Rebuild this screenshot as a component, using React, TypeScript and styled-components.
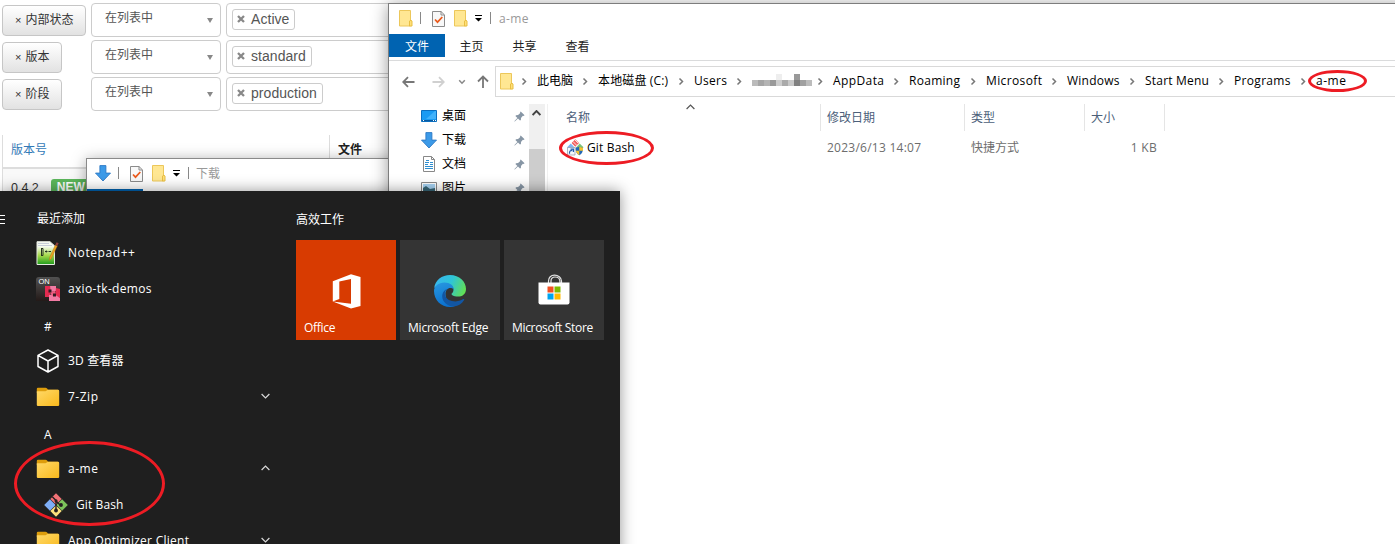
import React from 'react';
import styled, { createGlobalStyle } from 'styled-components';

const GlobalStyle = createGlobalStyle`
  *, *::before, *::after { box-sizing: border-box; }
  html, body { margin: 0; padding: 0; overflow: hidden; }
  body { font: 12px/18px "Open Sans", "Noto Sans CJK SC", sans-serif; color: #000; background: #fff; }
  svg { display: block; flex: none; }
`;

const Desktop = styled.div`
  position: relative;
  width: 1395px;
  height: 544px;
  overflow: hidden;
  background: #fff;
`;

const Text = styled.span<{ $spacing?: number }>`
  white-space: nowrap;
  letter-spacing: ${p => p.$spacing ?? 0}px;
`;

/* ---------- Web page with filters ---------- */

const WebPage = styled.div`
  width: 1395px;
  padding: 3px 0 0 2px;
  font-family: "Liberation Sans", "Noto Sans CJK SC", sans-serif;
`;
const Filters = styled.div`
  display: flex;
  flex-direction: column;
  gap: 3px;
`;
const FilterRow = styled.div`
  display: grid;
  grid-template-columns: 84px 130px 400px;
  column-gap: 5px;
  height: 34px;
`;
const FilterButton = styled.button`
  justify-self: start;
  align-self: start;
  height: 31px;
  margin-top: 2px;
  padding: 1px 12px 1px;
  border: 1px solid #c6c6c6;
  border-radius: 4px;
  background: linear-gradient(#fff, #e2e2e2);
  color: #333;
  font: 12px/27px "Liberation Sans", "Noto Sans CJK SC", sans-serif;
  white-space: nowrap;
`;
const Cross = styled.span`
  margin-right: 4px;
  font-size: 11px;
`;
const SelectBox = styled.div`
  display: flex;
  justify-content: space-between;
  padding: 5px 7px 0 13px;
  border: 1px solid #ccc;
  border-radius: 4px;
  background: #fff;
  color: #555;
`;
const Caret = styled.i`
  width: 0;
  height: 0;
  margin-top: 9px;
  border: 3px solid transparent;
  border-top: 5px solid #888;
  border-bottom: 0;
`;
const TagBox = styled(SelectBox)`
  justify-content: flex-start;
  padding: 5px;
`;
const Tag = styled.span`
  display: flex;
  align-items: center;
  gap: 6px;
  height: 21px;
  padding: 0 5px 1px 4px;
  border: 1px solid #ccc;
  border-radius: 3px;
  color: #555;
  font-size: 14px;
  letter-spacing: 0.05px;
`;
const Table = styled.div`
  display: grid;
  grid-template-columns: 327px 1fr;
  margin-top: 24px;
`;
const HeadCell = styled.div<{ $link?: boolean }>`
  height: 34px;
  padding: 6px 8px 0;
  border-left: 1px solid #ddd;
  border-bottom: 2px solid #ddd;
  color: ${p => (p.$link ? '#337ab7' : '#222')};
  font-weight: ${p => (p.$link ? 400 : 700)};
`;
const BodyCell = styled.div`
  display: flex;
  gap: 12px;
  height: 40px;
  padding: 10px 8px 0;
  border-left: 1px solid #ddd;
  background: #f9f9f9;
  color: #333;
  font-size: 12.5px;
`;
const Badge = styled.span`
  height: 18px;
  padding: 0 6px;
  border-radius: 3px;
  background: #5cb85c;
  color: #fff;
  font-size: 12px;
  font-weight: 700;
  line-height: 17px;
`;

/* ---------- Explorer windows ---------- */

const DownloadWindow = styled.section`
  position: absolute;
  left: 86px;
  top: 158px;
  width: 700px;
  height: 200px;
  border: 1px solid #8a8a8a;
  background: #fff;
  box-shadow: 0 2px 14px rgba(0, 0, 0, 0.35);
`;
const ExplorerWindow = styled.section`
  position: absolute;
  left: 388px;
  top: 3px;
  width: 1020px;
  height: 600px;
  border: 1px solid #7d7d7d;
  background: #fff;
  box-shadow: 0 2px 16px rgba(0, 0, 0, 0.4);
`;
const TitleBar = styled.header<{ $indent: number }>`
  display: flex;
  align-items: center;
  height: 30px;
  padding: 0 0 1px ${p => p.$indent}px;
  color: #999;
`;
const TitleDivider = styled.i<{ $before: number; $after: number }>`
  width: 1px;
  height: 12px;
  margin: 0 ${p => p.$after}px 1px ${p => p.$before}px;
  background: #888;
`;
const Gap = styled.i<{ $width: number }>`
  flex: none;
  width: ${p => p.$width}px;
`;
const TabBar = styled.nav`
  display: flex;
  height: 27px;
  border-bottom: 1px solid #dadbdc;
`;
const Tab = styled.span<{ $active?: boolean }>`
  width: ${p => (p.$active ? 56 : 53)}px;
  height: 23px;
  text-align: center;
  line-height: 25px;
  color: ${p => (p.$active ? '#fff' : '#222')};
  background: ${p => (p.$active ? '#0063b1' : 'transparent')};
`;
const NavBar = styled.div`
  display: flex;
  align-items: center;
  height: 43px;
  padding: 5px 0 7px 13px;
`;
const AddressBar = styled.div`
  display: flex;
  align-items: center;
  flex: 1;
  height: 31px;
  margin-left: 6px;
  padding: 0 0 1px 4px;
  border: 1px solid #d9d9d9;
`;
const Crumb = styled.span<{ $width: number }>`
  display: flex;
  align-items: center;
  gap: 7px;
  flex: none;
  width: ${p => p.$width}px;
  height: 28px;
`;
const Mosaic = styled.span`
  display: grid;
  grid-template-columns: repeat(10, 6px);
  grid-template-rows: 6px 6px;
  margin-top: -3px;
`;
const MosaicCell = styled.i<{ $shade: string }>`
  background: ${p => p.$shade};
`;
const Content = styled.div`
  display: flex;
`;
const Sidebar = styled.aside`
  width: 140px;
`;
const SideItem = styled.div`
  display: flex;
  align-items: center;
  height: 24px;
  padding: 0 4px 0 32px;
`;
const SideIcon = styled.span`
  display: flex;
  justify-content: center;
  width: 16px;
`;
const SideLabel = styled.span`
  flex: 1;
  margin-left: 5px;
`;
const ScrollBar = styled.div`
  width: 16px;
  height: 120px;
  background: #f0f0f0;
`;
const ScrollButton = styled.div`
  display: grid;
  place-items: center;
  height: 45px;
  padding: 0 1px 28px 0;
`;
const ScrollThumb = styled.div`
  height: 75px;
  background: #cdcdcd;
`;
const FileList = styled.div`
  position: relative;
  flex: 1;
  margin-left: 2px;
  border-left: 1px solid #f0f0f0;
`;
const ListRow = styled.div<{ $head?: boolean }>`
  display: grid;
  grid-template-columns: 273px 144px 120px 80px 1fr;
  height: ${p => (p.$head ? 27 : 33)}px;
  line-height: ${p => (p.$head ? 27 : 33)}px;
  color: ${p => (p.$head ? '#4c607a' : '#6d6d6d')};
`;
const HeadLabel = styled.span<{ $first?: boolean }>`
  padding-left: ${p => (p.$first ? 18 : 6)}px;
  border-right: 1px solid #e5e5e5;
`;
const FileName = styled.span`
  display: flex;
  align-items: center;
  gap: 3px;
  padding-left: 19px;
  color: #000;
`;
const Cell = styled.span<{ $right?: boolean }>`
  padding: 0 8px 0 6px;
  text-align: ${p => (p.$right ? 'right' : 'left')};
`;
const SortMark = styled.span`
  position: absolute;
  left: 138px;
  top: 0;
`;

/* ---------- Start menu ---------- */

const StartMenu = styled.section`
  position: absolute;
  left: 0;
  top: 191px;
  display: flex;
  width: 620px;
  height: 353px;
  overflow: hidden;
  background: #1f1f1f;
  color: #fff;
`;
const StartShadow = styled.div`
  position: absolute;
  left: 0;
  top: 191px;
  width: 620px;
  height: 380px;
  box-shadow: 0 0 14px rgba(0, 0, 0, 0.42);
`;
const Rail = styled.div`
  display: flex;
  flex-direction: column;
  gap: 3px;
  width: 32px;
  padding-top: 24px;
`;
const RailLine = styled.i`
  width: 5px;
  height: 1px;
  background: #fff;
`;
const AppList = styled.div`
  width: 264px;
  padding-top: 10px;
`;
const GroupTitle = styled.div`
  height: 36px;
  padding-left: 12px;
  line-height: 40px;
`;
const GroupHead = styled.div`
  height: 34px;
  padding-left: 5px;
  line-height: 35px;
`;
const AppRow = styled.div<{ $child?: boolean }>`
  display: flex;
  align-items: center;
  gap: 8px;
  height: 36px;
  padding-left: ${p => (p.$child ? 12 : 4)}px;
`;
const AppName = styled(Text)`
  flex: 1;
`;
const ChevronSlot = styled.span`
  padding: 0 26px 2px 0;
`;
const TileGroup = styled.div`
  padding-top: 20px;
`;
const Tiles = styled.div`
  display: flex;
  gap: 4px;
  margin-top: 11px;
`;
const Tile = styled.div<{ $color: string }>`
  display: flex;
  flex-direction: column;
  width: 100px;
  height: 100px;
  padding: 34px 8px 3px;
  background: ${p => p.$color};
`;
const TileArt = styled.div`
  display: flex;
  justify-content: center;
  flex: 1;
`;

const Ring = styled.i<{ $x: number; $y: number; $w: number; $h: number }>`
  position: absolute;
  left: ${p => p.$x}px;
  top: ${p => p.$y}px;
  width: ${p => p.$w}px;
  height: ${p => p.$h}px;
  border: 2.5px solid #ed1c24;
  border-width: 3px;
  border-radius: 50%;
`;

/* ---------- Icons ---------- */

const SmallFolder = () => (
  <svg width="14" height="17" viewBox="0 0 14 17">
    <path d="M.5 .5H11.5V16H.5Z" fill="#ffe793" stroke="#ecc75a" />
    <path d="M10.5 16V11L12 10.3l1 .7v5Z" fill="#ffe07a" stroke="#e9bf43" />
  </svg>
);
const CheckDoc = () => (
  <svg width="13" height="17" viewBox="0 0 13 17">
    <path d="M.5 1.5H9l3.5 3.4v11.600H.5Z" fill="#f8f8f8" stroke="#8b8b8b" />
    <path d="M9 1.5V5h3.5" fill="none" stroke="#8b8b8b" />
    <path d="m3 9.5 2.5 2.7L10.3 7" fill="none" stroke="#ea5a1c" strokeWidth="1.7" />
  </svg>
);
const MenuMark = () => (
  <svg width="7" height="7" viewBox="0 0 7 7">
    <path d="M0 0h7v1H0ZM0 3h7L3.5 6.5Z" fill="#000" />
  </svg>
);
const DownArrow = () => (
  <svg width="16" height="17" viewBox="0 0 16 17">
    <path d="M4.900.6h6v7.500H15.500L8 16 .5 8.100h4.400Z" fill="#3c9ae8" stroke="#2b78c4" strokeWidth=".9" />
  </svg>
);
const CrumbArrow = () => (
  <svg width="12" height="10" viewBox="0 0 12 10">
    <path d="m4.500 2.500 3 3-3 3" fill="none" stroke="#777" strokeWidth="1.500" />
  </svg>
);
const NavArrow = ({ color, flip }: { color: string; flip?: boolean }) => (
  <svg width="13" height="12" viewBox="0 0 13 12">
    <path
      d={flip ? 'M.5 6h11M7 1.200 11.800 6 7 10.800' : 'M12.500 6H1.500M6 1.200 1.200 6 6 10.800'}
      fill="none"
      stroke={color}
      strokeWidth="1.800"
    />
  </svg>
);
const UpArrow = () => (
  <svg width="12" height="13" viewBox="0 0 12 13">
    <path d="M6 13V1.5M1 6.5l5-5 5 5" fill="none" stroke="#777" strokeWidth="1.8" />
  </svg>
);
const SmallDown = () => (
  <svg width="8" height="6" viewBox="0 0 8 6">
    <path d="m1.2 1.2 2.8 3 2.8-3" fill="none" stroke="#888" strokeWidth="1.5" />
  </svg>
);
const Chevron = ({ up, color = '#d8d8d8', thick = 1.2 }: { up?: boolean; color?: string; thick?: number }) => (
  <svg width="9" height="6" viewBox="0 0 9 6">
    <path d={up ? 'M.6 5 4.5 1 8.4 5' : 'M.6 1 4.5 5 8.4 1'} fill="none" stroke={color} strokeWidth={thick} />
  </svg>
);
const Pin = () => (
  <svg width="11" height="11" viewBox="0 0 11 11">
    <path d="M6.7.4 10.6 4.3 9.5 5 8.9 4.8 7 7 6.9 9 6 9.6 4 7.6.8 10.6.3 10.2 3.4 7 1.4 5 2.1 4.2 4.1 4 6.3 2.1 6 1.3Z" fill="#8796a5" />
  </svg>
);
const DesktopIcon = () => (
  <svg width="16" height="12" viewBox="0 0 16 12">
    <path d="M.5.5h15v11H.5Z" fill="#1a9bf3" stroke="#0b6fc0" />
    <path d="m5 9 9-8H15v8Z" fill="#41b2fb" />
    <path d="M1 10.5h14" stroke="#085a9f" />
    <path d="M2 10.500h1M12 10.500h1M14 10.500h1" stroke="#fff" />
  </svg>
);
const DocIcon = () => (
  <svg width="16" height="16" viewBox="0 0 16 16">
    <path d="M2.5.5h8l3 3v12h-11Z" fill="#fff" stroke="#888" />
    <path d="M10.500 .5v3h3" fill="none" stroke="#888" />
    <path d="M4 6.5h4M4 8.5h3M4 10.5h8M4 12.5h8M9 6.5h3M9 8.5h3M5 4.5h3" stroke="#2e8ed0" />
  </svg>
);
const PictureIcon = () => (
  <svg width="16" height="13" viewBox="0 0 16 13">
    <path d="M.5.5h15v12H.5Z" fill="#fff" stroke="#888" />
    <path d="M2 2h12v9H2Z" fill="#a8d4f4" />
    <path d="m2 6 3-2 4 3 5-1v5H2Z" fill="#386879" />
  </svg>
);
const GitShortcut = () => (
  <svg width="17" height="17" viewBox="0 0 17 17">
    <path d="M8.3.3 12 4 8.3 7.7 4.6 4Z" fill="#f06060" />
    <path d="m6 2.6 4 4M8 1l3 3" stroke="#fff" strokeWidth=".8" />
    <path d="m3.8 4.6 3.6 3.6L4 11.5.2 8.2Z" fill="#7db4f3" />
    <path d="M12.7 4.6 16.5 8.3 12.8 12 9.2 8.2Z" fill="#7bc47a" />
    <path d="M.5 8.500h7.500v7.500h-7.500Z" fill="#f4f8fd" stroke="#8d99a8" strokeWidth=".7" />
    <path d="M2.500 14.800c-.2-2.300.6-3.400 2.800-3.400M3.500 10.200h2.900v2.900" fill="none" stroke="#235eae" strokeWidth="1.200" />
    <path d="M12.3 7.4c1.2.8 2.3 1 3.7 1 .2 3.7-.8 6.2-3.7 7.8-2.9-1.6-3.8-4-3.7-7.8 1.4 0 2.6-.3 3.7-1Z" fill="#2368b5" />
    <path d="M12.3 7.4c1.2.8 2.3 1 3.7 1v3.4h-3.7ZM12.3 11.8v4.4c-1.9-1-3-2.5-3.5-4.4Z" fill="#f4c42f" />
  </svg>
);
const NotepadIcon = () => (
  <svg width="24" height="24" viewBox="0 0 24 24">
    <defs>
      <linearGradient id="npp" x1="0" y1="0" x2="0" y2="1">
        <stop offset=".2" stopColor="#f7fbf2" />
        <stop offset=".6" stopColor="#a6d94b" />
        <stop offset="1" stopColor="#1d9a1b" />
      </linearGradient>
    </defs>
    <path d="M1 .7h13l4.500 4v18.800H1Z" fill="url(#npp)" stroke="#e4e8e0" />
    <path d="M2 4.5h14M2 2.5h11" stroke="#c8ced8" />
    <path d="M5.500 7v7.500M5 7.500h2v7H5M9 10.500h2.500M10.300 9.500v2M12.500 10.500h2.500" fill="none" stroke="#273421" strokeWidth="1" />
    <path d="m19.300 4 2 1-6 12.500-2 2 .3-3Z" fill="#eaa422" stroke="#a86c14" strokeWidth=".4" />
    <path d="m19.300 4 1.300-2.800 2 1-1.300 2.800Z" fill="#8d3d3a" />
  </svg>
);
const IconLabel = styled.text`
  font: 7.5px "Liberation Sans", sans-serif;
  fill: #fff;
`;
const AxioIcon = () => (
  <svg width="24" height="24" viewBox="0 0 24 24">
    <defs>
      <linearGradient id="axio" x1="0" y1="0" x2="0" y2="1">
        <stop offset="0" stopColor="#515151" />
        <stop offset="1" stopColor="#231a18" />
      </linearGradient>
    </defs>
    <path d="M3 0h18a3 3 0 0 1 3 3v21H0V3a3 3 0 0 1 3-3Z" fill="url(#axio)" />
    <IconLabel x="2.500" y="6.500">ON</IconLabel>
    <path d="M9 9h5l2 4-3 7H9Z" fill="#e52b50" />
    <path d="M14 9h6v5l-5 1Z" fill="#f27ba4" />
    <path d="m20 11 4 1v9l-5-2Z" fill="#e52b50" />
    <path d="m13 18 5-1 6 4v3H13Z" fill="#f27ba4" />
    <path d="m14 15 5-1 1 4-4 1Z" fill="#ee5c80" />
    <path d="M12.500 12.500h3v3h-3ZM17 16.500h3v3h-3Z" fill="#321b22" />
  </svg>
);
const CubeIcon = () => (
  <svg width="24" height="24" viewBox="0 0 24 24">
    <path d="M12 1 22 6.300V17.500L12 23 2 17.500V6.300ZM2 6.300 12 12 22 6.300M12 12V23" fill="none" stroke="#fff" strokeWidth="1.500" strokeLinejoin="round" />
  </svg>
);
const FolderIcon = () => (
  <svg width="24" height="20" viewBox="0 0 24 20">
    <defs>
      <linearGradient id="folder" x1="0" y1="0" x2="1" y2="1">
        <stop offset="0" stopColor="#ffd969" />
        <stop offset="1" stopColor="#f9b91c" />
      </linearGradient>
    </defs>
    <path d="M.8 2Q.8.800 2 .800h7.500q1 0 1.600.800l1 1.200H22V6H.8Z" fill="#dd9d0c" />
    <path d="M.8 4.300h8.700L12 2.800h10q1.200 0 1.200 1.200v14q0 1-1.200 1H2Q.8 19 .8 18Z" fill="url(#folder)" />
  </svg>
);
const GitIcon = () => (
  <svg width="24" height="24" viewBox="0 0 24 24">
    <path d="m12 .200 5.700 5.700L12 11.600 6.300 5.900Z" fill="#f27276" />
    <path d="M5.900 6.300 11.600 12 5.900 17.700.200 12Z" fill="#7eaef7" />
    <path d="M18.100 6.300 23.800 12 18.100 17.700 12.400 12Z" fill="#7cc35b" />
    <path d="m12 12.400 5.700 5.700L12 23.800 6.300 18.100Z" fill="#fbe07c" />
    <path d="m8.300 3.800 3.700 3.700V18M12 8l4.500 4.500" fill="none" stroke="#241f20" strokeWidth="1.400" />
    <circle cx="12" cy="17.500" r="1.900" fill="#241f20" />
    <circle cx="17" cy="12" r="1.900" fill="#241f20" />
    <circle cx="12" cy="7.800" r="1.500" fill="#241f20" />
  </svg>
);
const OfficeIcon = () => (
  <svg width="30" height="35" viewBox="0 0 30 35">
    <path d="M1.800 7.300 20 .3 29.500 3v29L20 34.500 1.800 27.500 20 29.800V4.900L8.300 7.600V25L1.800 27.600Z" fill="#fff" />
  </svg>
);
const EdgeIcon = () => (
  <svg width="34" height="34" viewBox="0 0 34 34">
    <defs>
      <linearGradient id="edgeTop" x1="0" y1=".3" x2="1" y2=".6">
        <stop offset="0" stopColor="#38b6ef" />
        <stop offset=".5" stopColor="#2fc5d6" />
        <stop offset="1" stopColor="#62df55" />
      </linearGradient>
      <linearGradient id="edgeLeft" x1=".2" y1="0" x2=".5" y2="1">
        <stop offset="0" stopColor="#2796df" />
        <stop offset="1" stopColor="#0a6fce" />
      </linearGradient>
    </defs>
    <path d="M1.200 14C2 6 9 .900 17 .900c9.500 0 16 6.600 16 14 0 5.200-4 7.700-8 7.700-4.800 0-6.500-1.600-6.500-2.500 0-.8 2-1.300 2-4.600 0-3-3.500-5.500-8-5.500-5 0-8.500 1.500-11.300 4Z" fill="url(#edgeTop)" />
    <path d="M1 17c0-5 4.500-8.600 10.500-8.600 5.500 0 9.300 3.200 9.300 7-4-3.400-8.300-.4-8.300 4.600 0 5.500 4 11 10.500 11.500-2 1-4 1.500-6 1.500C8 33 1 26 1 17Z" fill="url(#edgeLeft)" />
    <path d="M14.500 14.700c-2 1.300-3.200 3.500-2.500 6.300 1.200 4.500 5.700 6.400 10.500 6.400 3.500 0 6.200-1.400 7.700-2.300.8-.4 1.300.2.900.9C29 29.500 25.500 32 21 32.500c-6.500 0-11.500-4.500-11.800-10 0-3.500 2-6.800 5.300-7.800Z" fill="#1256a3" />
  </svg>
);
const StoreIcon = () => (
  <svg width="32" height="32" viewBox="0 0 32 32">
    <path d="M10.500 9V7c0-3.500 2.500-5.800 6-5.800S23.500 3.500 23.500 7v2M13 9V7c0-2.500 1.500-4 4-4s5 1.500 5 5v1" fill="none" stroke="#e4e4e4" strokeWidth="1.200" />
    <path d="M.5 8.500h31v20q0 2-2 2h-27q-2 0-2-2Z" fill="#fff" />
    <path d="M9.500 12.500h6v6h-6Z" fill="#f25022" />
    <path d="M16.500 12.500h6v6h-6Z" fill="#7fba00" />
    <path d="M9.500 19.500h6v6h-6Z" fill="#00a4ef" />
    <path d="M16.500 19.500h6v6h-6Z" fill="#ffb900" />
  </svg>
);
const TagCross = () => (
  <svg width="8" height="8" viewBox="0 0 8 8">
    <path d="m1 1 6 6M7 1 1 7" stroke="#888" strokeWidth="2.300" />
  </svg>
);

/* ---------- Data ---------- */

const filters = [
  { field: '内部状态', value: 'Active' },
  { field: '版本', value: 'standard' },
  { field: '阶段', value: 'production' },
];
const crumbs = [
  { name: '此电脑', width: 61, spacing: 0 },
  { name: '本地磁盘 (C:)', width: 96, spacing: 0.15 },
  { name: 'Users', width: 58, spacing: 0.29 },
  { name: '', width: 81, spacing: 0 },
  { name: 'AppData', width: 76, spacing: 0.4 },
  { name: 'Roaming', width: 77, spacing: 0.28 },
  { name: 'Microsoft', width: 81, spacing: 0.38 },
  { name: 'Windows', width: 78, spacing: 0.24 },
  { name: 'Start Menu', width: 89, spacing: 0.21 },
  { name: 'Programs', width: 82, spacing: 0.32 },
  { name: 'a-me', width: 70, spacing: 0.54 },
];
const mosaic = [
  '#fff', '#fff', '#fff', '#fff', '#eee', '#fff', '#fff', '#999', '#fff', '#fff',
  '#bbb', '#a5a5a5', '#b4b4b4', '#999', '#ccc', '#aaa', '#c8c8c8', '#808080', '#a0a0a0', '#bcbcbc',
];
const places = [
  { name: '桌面', Icon: DesktopIcon },
  { name: '下载', Icon: DownArrow },
  { name: '文档', Icon: DocIcon },
  { name: '图片', Icon: PictureIcon },
];

export default function App() {
  return (
    <Desktop>
      <GlobalStyle />
      <WebPage>
        <Filters>
          {filters.map(f => (
            <FilterRow key={f.field}>
              <FilterButton><Cross>×</Cross>{f.field}</FilterButton>
              <SelectBox>在列表中<Caret /></SelectBox>
              <TagBox><Tag><TagCross />{f.value}</Tag></TagBox>
            </FilterRow>
          ))}
        </Filters>
        <Table>
          <HeadCell $link>版本号</HeadCell>
          <HeadCell>文件</HeadCell>
          <BodyCell>0.4.2<Badge>NEW</Badge></BodyCell>
          <BodyCell />
        </Table>
      </WebPage>

      <DownloadWindow>
        <TitleBar $indent={8}>
          <DownArrow />
          <TitleDivider $before={7} $after={11} />
          <CheckDoc /><Gap $width={9} /><SmallFolder /><Gap $width={7} /><MenuMark />
          <TitleDivider $before={8} $after={7} />
          <Text>下载</Text>
        </TitleBar>
        <TabBar><Tab $active>文件</Tab></TabBar>
      </DownloadWindow>

      <ExplorerWindow>
        <TitleBar $indent={10}>
          <SmallFolder />
          <TitleDivider $before={7} $after={11} />
          <CheckDoc /><Gap $width={9} /><SmallFolder /><Gap $width={7} /><MenuMark />
          <TitleDivider $before={8} $after={8} />
          <Text $spacing={0.4}>a-me</Text>
        </TitleBar>
        <TabBar>
          <Tab $active>文件</Tab><Tab>主页</Tab><Tab>共享</Tab><Tab>查看</Tab>
        </TabBar>
        <NavBar>
          <NavArrow color="#777" /><Gap $width={17} />
          <NavArrow color="#d0d0d0" flip /><Gap $width={13} />
          <SmallDown /><Gap $width={11} />
          <UpArrow />
          <AddressBar>
            <SmallFolder /><Gap $width={4} />
            {crumbs.map((c, i) => (
              <Crumb key={i} $width={c.width}>
                <CrumbArrow />
                {c.name ? <Text $spacing={c.spacing}>{c.name}</Text> : (
                  <Mosaic>{mosaic.map((shade, n) => <MosaicCell key={n} $shade={shade} />)}</Mosaic>
                )}
              </Crumb>
            ))}
          </AddressBar>
        </NavBar>
        <Content>
          <Sidebar>
            {places.map(({ name, Icon }) => (
              <SideItem key={name}><SideIcon><Icon /></SideIcon><SideLabel>{name}</SideLabel><Pin /></SideItem>
            ))}
          </Sidebar>
          <ScrollBar>
            <ScrollButton><Chevron up color="#444" thick={1.9} /></ScrollButton>
            <ScrollThumb />
          </ScrollBar>
          <FileList>
            <SortMark><Chevron up color="#555" /></SortMark>
            <ListRow $head>
              <HeadLabel $first>名称</HeadLabel>
              <HeadLabel>修改日期</HeadLabel>
              <HeadLabel>类型</HeadLabel>
              <HeadLabel>大小</HeadLabel>
            </ListRow>
            <ListRow>
              <FileName><GitShortcut /><Text $spacing={0.15}>Git Bash</Text></FileName>
              <Cell><Text $spacing={0.25}>2023/6/13 14:07</Text></Cell>
              <Cell>快捷方式</Cell>
              <Cell $right><Text $spacing={0.3}>1 KB</Text></Cell>
            </ListRow>
          </FileList>
        </Content>
      </ExplorerWindow>

      <StartShadow />
      <StartMenu>
        <Rail><RailLine /><RailLine /><RailLine /></Rail>
        <AppList>
          <GroupHead>最近添加</GroupHead>
          <AppRow><NotepadIcon /><AppName $spacing={0.58}>Notepad++</AppName></AppRow>
          <AppRow><AxioIcon /><AppName $spacing={0.32}>axio-tk-demos</AppName></AppRow>
          <GroupTitle>#</GroupTitle>
          <AppRow><CubeIcon /><AppName $spacing={0.15}>3D 查看器</AppName></AppRow>
          <AppRow><FolderIcon /><AppName $spacing={0.51}>7-Zip</AppName><ChevronSlot><Chevron /></ChevronSlot></AppRow>
          <GroupTitle>A</GroupTitle>
          <AppRow><FolderIcon /><AppName $spacing={0.54}>a-me</AppName><ChevronSlot><Chevron up /></ChevronSlot></AppRow>
          <AppRow $child><GitIcon /><AppName $spacing={0.1}>Git Bash</AppName></AppRow>
          <AppRow><FolderIcon /><AppName $spacing={0.27}>App Optimizer Client</AppName><ChevronSlot><Chevron /></ChevronSlot></AppRow>
        </AppList>
        <TileGroup>
          <Text>高效工作</Text>
          <Tiles>
            <Tile $color="#d83b01"><TileArt><OfficeIcon /></TileArt><Text $spacing={-0.3}>Office</Text></Tile>
            <Tile $color="#343434"><TileArt><EdgeIcon /></TileArt><Text $spacing={-0.22}>Microsoft Edge</Text></Tile>
            <Tile $color="#343434"><TileArt><StoreIcon /></TileArt><Text $spacing={-0.32}>Microsoft Store</Text></Tile>
          </Tiles>
        </TileGroup>
      </StartMenu>

      <Ring $x={559} $y={131} $w={95} $h={34} />
      <Ring $x={1308} $y={70} $w={59} $h={22} />
      <Ring $x={14} $y={441} $w={151} $h={85} />
    </Desktop>
  );
}
